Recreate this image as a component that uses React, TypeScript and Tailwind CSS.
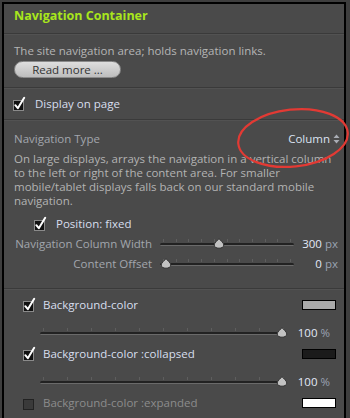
import React from "react";

const font = { fontFamily: '"Open Sans", "Noto Sans", sans-serif' };

function Check({ checked = true }: { checked?: boolean }) {
  return (
    <svg width="14" height="14" viewBox="0 0 14 14" className="overflow-visible shrink-0">
      <rect x="0.5" y="3.5" width="10" height="10" fill={checked ? "#111" : "#3a3a3a"} stroke={checked ? "#8a8a8a" : "#222"} />
      {checked && (
        <path d="M2.3 8.2 L4.8 11.2 L11.2 0.8" fill="none" stroke="#fff" strokeWidth="2" strokeLinecap="round" strokeLinejoin="round" />
      )}
    </svg>
  );
}

function Thumb() {
  return (
    <svg width="12" height="11" viewBox="0 0 12 11">
      <path d="M6 0.6 C7 2.2 10.8 4.8 10.8 7 C10.8 9 8.6 10.2 6 10.2 C3.4 10.2 1.2 9 1.2 7 C1.2 4.8 5 2.2 6 0.6Z" fill="#c2c2c2" stroke="#2a2a2a" strokeWidth="0.9" />
    </svg>
  );
}

function Slider({ width, pos }: { width: number; pos: number }) {
  const ticks = Array.from({ length: 11 }, (_, i) => i);
  return (
    <div className="relative h-[14px]" style={{ width }}>
      {ticks.map((i) => (
        <div key={i} className="absolute top-[2px] w-px h-[3px] bg-[#5e5e5e]" style={{ left: 3 + ((width - 7) * i) / 10 }} />
      ))}
      <div className="absolute left-0 right-0 top-[6px] h-[3px] rounded-full bg-[#222] border-b border-[#6a6a6a]" />
      <div className="absolute top-[1px]" style={{ left: pos - 6 }}>
        <Thumb />
      </div>
    </div>
  );
}

function Sep() {
  return <div className="h-px bg-[#3a3a3a] shadow-[0_1px_0_#525252]" />;
}

export default function App() {
  return (
    <div className="relative w-[350px] h-[418px] overflow-hidden bg-[#3e3e3e] pl-[2px] pt-[2px] pr-[4px] text-[11.5px]" style={font}>
      <div className="h-[430px] bg-[#4a4a4a] border-l-2 border-t-2 border-r-2 border-black">
        {/* header */}
        <div className="h-[29px] pl-[10px] pt-[3px]">
          <span className="font-bold text-[12.5px] text-[#a8e61c] leading-[16px]">Navigation Container</span>
        </div>
        <Sep />
        <div className="pl-[10px] pt-[9px] pb-[9px]">
          <div className="text-[#b5b5b5] leading-[16px]">The site navigation area; holds navigation links.</div>
          <div className="mt-[2px] w-[107px] h-[17px] rounded-full bg-gradient-to-b from-[#dedede] to-[#bdbdbd] border border-[#8a8a8a] flex items-center justify-center text-[#333] text-[11.5px] leading-none">
            Read more ...
          </div>
        </div>
        <Sep />
        <div className="h-[31px] pl-[9px] flex items-center gap-[8px]">
          <Check />
          <span className="text-[#d8dfee]">Display on page</span>
        </div>
        <Sep />
        <div className="pl-[10px] pr-[4px] pt-[11px]">
          <div className="flex items-center justify-between h-[16px]">
            <span className="text-[#a2a6ad]">Navigation Type</span>
            <span className="flex items-center gap-[3px] text-[#dbe2f0]">
              Column
              <svg width="7" height="10" viewBox="0 0 7 10">
                <path d="M3.5 0.5 L6.5 4 H0.5Z M3.5 9.5 L6.5 6 H0.5Z" fill="#a9adb5" />
              </svg>
            </span>
          </div>
          <div className="mt-[5px] text-[#b3b3b3] leading-[14px] whitespace-nowrap">
            On large displays, arrays the navigation in a vertical column<br />
            to the left or right of the content area. For smaller<br />
            mobile/tablet displays falls back on our standard mobile<br />
            navigation.
          </div>
          <div className="mt-[6px] h-[20px] pl-[20px] flex items-center gap-[8px]">
            <Check />
            <span className="text-[#d8dfee]">Position: fixed</span>
          </div>
          <div className="h-[20px] flex items-center">
            <span className="w-[138px] text-right text-[#a2a6ad] whitespace-nowrap">Navigation Column Width</span>
            <div className="ml-[8px]"><Slider width={134} pos={59} /></div>
            <span className="w-[44px] text-right"><span className="text-[#e2e9f7]">300</span> <span className="text-[#9aa3b3]">px</span></span>
          </div>
          <div className="h-[20px] flex items-center">
            <span className="w-[138px] text-right text-[#a2a6ad]">Content Offset</span>
            <div className="ml-[8px]"><Slider width={134} pos={6} /></div>
            <span className="w-[44px] text-right"><span className="text-[#e2e9f7]">0</span> <span className="text-[#9aa3b3]">px</span></span>
          </div>
        </div>
        <div className="h-[14px]" />
        <Sep />
        <div className="pl-[10px] pr-[8px] pt-[4px]">
          {[
            { label: "Background-color", color: "#aaaaaa", checked: true },
            { label: "Background-color :collapsed", color: "#1b1b1b", checked: true },
            { label: "Background-color :expanded", color: "#ffffff", checked: false },
          ].map((r, i) => (
            <div key={i}>
              <div className="h-[24px] pl-[9px] flex items-center">
                <Check checked={r.checked} />
                <span className={`ml-[6px] ${r.checked ? "text-[#d8dfee]" : "text-[#8c8c8c]"}`}>{r.label}</span>
                <div className="ml-auto w-[34px] h-[10px] border border-black" style={{ background: r.color }} />
              </div>
              {i < 2 && (
                <div className="h-[25px] pt-[9px] flex items-start">
                  <div className="ml-[26px]"><Slider width={247} pos={242} /></div>
                  <span className="w-[43px] text-right leading-[14px]"><span className="text-[#e2e9f7]">100</span> <span className="text-[#9aa3b3]">%</span></span>
                </div>
              )}
            </div>
          ))}
        </div>
      </div>
      <svg className="absolute left-0 top-0 pointer-events-none" width="350" height="418">
        <ellipse cx="293" cy="138" rx="55" ry="28.5" transform="rotate(-6 293 138)" fill="none" stroke="#e23a34" strokeWidth="2.2" />
      </svg>
    </div>
  );
}
